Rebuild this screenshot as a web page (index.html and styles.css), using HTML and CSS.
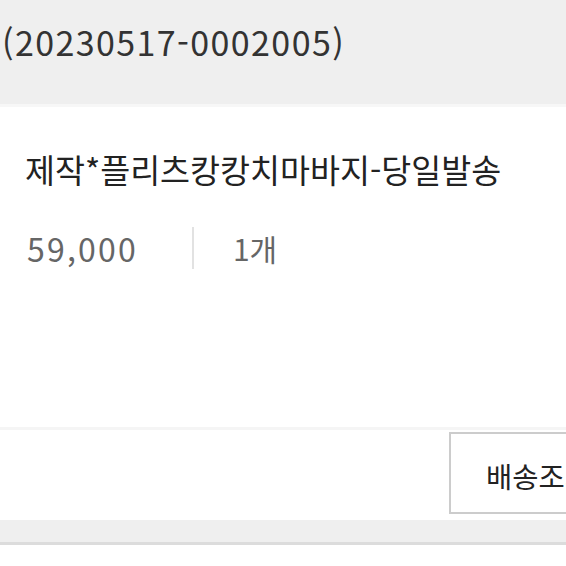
FILE: index.html
```html
<!DOCTYPE html>
<html lang="ko">
<head>
    <meta charset="UTF-8">
    <meta name="viewport" content="width=device-width, initial-scale=1.0">
    <title>주문 상세</title>
    <link rel="stylesheet" href="styles.css">
</head>
<body>
    <div class="order-head">
        <span class="order-no">(20230517-0002005)</span>
    </div>
    <div class="item">
        <h2 class="item-name">제작*플리츠캉캉치마바지-당일발송</h2>
        <div class="item-meta">
            <span class="price">59,000</span>
            <span class="divider"></span>
            <span class="qty">1개</span>
        </div>
    </div>
    <div class="actions">
        <button class="track-button">배송조회</button>
    </div>
    <div class="gap"></div>
</body>
</html>
```

FILE: styles.css
```css
html, body {
    margin: 0;
    padding: 0;
}
body {
    font-family: "Noto Sans CJK KR", "Noto Sans", sans-serif;
    background-color: white;
    width: 566px;
    overflow: hidden;
}
.order-head {
    height: 107px;
    background-color: #efefef;
    padding-left: 2px;
    border-bottom: 3px solid #f7f7f7;
    box-sizing: border-box;
}
.order-no {
    display: block;
    padding-top: 17px;
    font-size: 34px;
    letter-spacing: 1.4px;
    line-height: 50px;
    color: #333;
}
.item {
    padding: 0 25px;
    height: 320px;
    border-bottom: 3px solid #f5f5f5;
}
.item-name {
    margin: 0;
    padding-top: 37px;
    font-size: 32.6px;
    font-weight: normal;
    line-height: 50px;
    color: #222;
}
.item-meta {
    display: flex;
    align-items: center;
    margin-top: 31px;
    font-size: 32px;
    color: #666;
}
.price {
    letter-spacing: 2.2px;
    padding-left: 2px;
}
.divider {
    width: 2px;
    height: 42px;
    background-color: #e2e2e2;
    margin: 0 39px 0 54px;
}
.qty {
    font-size: 30px;
}
.actions {
    display: flex;
    justify-content: flex-end;
    height: 90px;
    padding-top: 2px;
    box-sizing: border-box;
    overflow: hidden;
}
.track-button {
    flex: none;
    width: 150px;
    height: 82px;
    margin-right: -33px;
    background-color: white;
    border: 2px solid #cccccc;
    font-family: inherit;
    font-size: 28.5px;
    color: #222;
    text-align: left;
    white-space: nowrap;
    padding: 4px 0 0 35px;
}
.gap {
    height: 22px;
    background-color: #efefef;
    border-bottom: 3px solid #dcdcdc;
}
```
